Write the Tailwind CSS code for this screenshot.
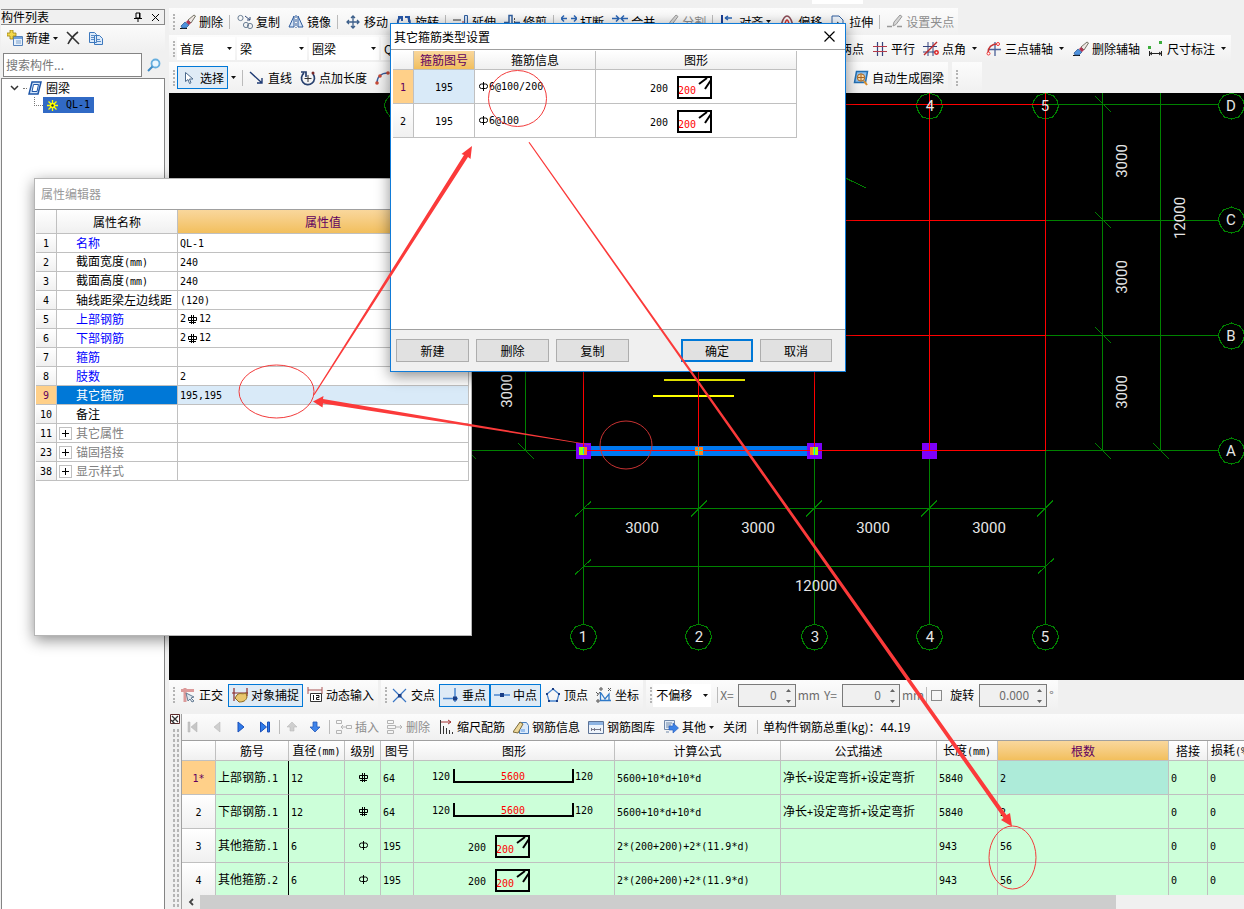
<!DOCTYPE html>
<html lang="zh-CN">
<head>
<meta charset="utf-8">
<title>钢筋算量</title>
<script src="https://cdn.jsdelivr.net/npm/@tailwindcss/browser@4"></script>
</head>
<body class="relative flex h-screen overflow-hidden bg-[#f0f0f0] font-['Noto_Sans_CJK_SC',sans-serif] text-[12px] leading-4 text-black">

<svg class="hidden" aria-hidden="true">
  <symbol id="caret" viewBox="0 0 5 3"><path d="M0 0h5L2.500 3z" fill="#111"/></symbol>
  <symbol id="erase" viewBox="0 0 16 16"><path d="M0 14.500h7" stroke="#111"/><path d="M1 12l4-4 4 3-3 3H2z" fill="#4f92dc" stroke="#27518e" stroke-width=".700"/><path d="M8 6l3 3 4.500-7-1.500-1z" fill="#efe7e4" stroke="#554" stroke-width=".800"/><path d="M6 8l3 3 2-2-3-3z" fill="#b03352"/></symbol>
  <symbol id="copy2" viewBox="0 0 16 16" fill="none" stroke="#6b7f95"><circle cx="3.500" cy="4" r="2.600"/><circle cx="9" cy="11" r="2.600"/><circle cx="13" cy="12" r="2.600"/><path d="M8 2l5 4m0-3v3h-3" stroke="#334a77"/></symbol>
  <symbol id="mirror" viewBox="0 0 16 16"><path d="M6 2v11H1zM10 2v11h5z" fill="#d6e4f6" stroke="#2c5a9c"/><path d="M8 1v13" stroke="#2c5a9c" stroke-dasharray="3 1"/></symbol>
  <symbol id="move" viewBox="0 0 16 16"><path d="M8 2v12M2 8h12M6 4l2-2 2 2M6 12l2 2 2-2M4 6L2 8l2 2M12 6l2 2-2 2" fill="none" stroke="#3d5f8a" stroke-width="1.300"/></symbol>
  <symbol id="rotate" viewBox="0 0 16 16"><path d="M5 3a6 6 0 1 0 7 1M2 3h4v4M13 8V3H9" fill="none" stroke="#2757a8" stroke-width="2"/></symbol>
  <symbol id="extend" viewBox="0 0 16 16"><path d="M0 6h8M0 10h8" stroke="#333"/><path d="M9 8h3" stroke="#a33"/><path d="M11.500 1.500h3v12h-3z" fill="#d6e4f6" stroke="#315f9e"/></symbol>
  <symbol id="trim" viewBox="0 0 16 16"><path d="M0 8.500h5M11 8.500h5M5 13V1.500h3v11" fill="none" stroke="#315f9e" stroke-width="1.500"/><path d="M10.500 4v9" stroke="#555" stroke-dasharray="2 1"/></symbol>
  <symbol id="break" viewBox="0 0 16 16"><path d="M0 4.500h6M10 4.500h6M3 1.500l-3 3 3 3M13 1.500l3 3-3 3" fill="none" stroke="#2b66b5" stroke-width="1.500"/><path d="M1 12h5M10 12h5" stroke="#a33"/></symbol>
  <symbol id="merge" viewBox="0 0 16 16"><path d="M0 4.500h6M10 4.500h6M4 1.500l3 3-3 3M12 1.500l-3 3 3 3" fill="none" stroke="#2b66b5" stroke-width="1.500"/><path d="M1 12h14" stroke="#a33"/></symbol>
  <symbol id="split" viewBox="0 0 16 16"><path d="M0 12.500h5M10 12.500h5" stroke="#999" stroke-width="1.500"/><path d="M6 12l1-4 6-7 2 1.500-6 8z" fill="#d6d6d6" stroke="#999"/></symbol>
  <symbol id="align" viewBox="0 0 16 16"><path d="M2 1v14" stroke="#1b3f93" stroke-width="2"/><path d="M5 4h7M5 4l3-2M5 4l3 2" stroke="#2b66b5" fill="none" stroke-width="1.500"/><path d="M4 9h9v3H4z" fill="#c33"/></symbol>
  <symbol id="offset" viewBox="0 0 16 16" fill="none"><path d="M1 13c2-1 2-11 7-11s5 10 7 11" stroke="#8a4b55" stroke-width="1.500"/><path d="M5 13c1-1 1-7 3-7s2 6 3 7" stroke="#c33" stroke-width="1.500"/></symbol>
  <symbol id="stretch" viewBox="0 0 16 16"><path d="M2 14V2h7l4 4v8" fill="#eef4fb" stroke="#315f9e"/><path d="M7 8l7 5m0-3v3h-3" fill="none" stroke="#333"/></symbol>
  <symbol id="par" viewBox="0 0 16 16"><path d="M5.500 1v14M10.500 1v14" stroke="#35437c" stroke-width="1.200"/><path d="M1 5.500h14M1 10.500h14" stroke="#b33a4a" stroke-width="1.200"/></symbol>
  <symbol id="ang" viewBox="0 0 16 16"><path d="M5 1v14M10 1v14M0 5.500h14M0 11h12" stroke="#35437c"/><path d="M1 14L14 1" stroke="#c02a2a" stroke-width="1.500"/><circle cx="13.500" cy="11.500" r="1.700" fill="none" stroke="#d22" stroke-width="1.500"/></symbol>
  <symbol id="three" viewBox="0 0 16 16"><path d="M9 1v14M3 8.500h12" stroke="#4b6199" stroke-width="1.300"/><path d="M2 12C2 6 6 3 12 3" fill="none" stroke="#c53434" stroke-width="1.500"/><circle cx="2.500" cy="12.500" r="1.500" fill="#fff" stroke="#e33"/><circle cx="12" cy="3" r="1.500" fill="#fff" stroke="#e33"/></symbol>
  <symbol id="dim" viewBox="0 0 16 16"><path d="M0 5h3v3H0zM11 0h3v3h-3z" fill="#3cae3c"/><path d="M1.500 10v5M13.500 10v5M2 12.500h11M4 11l-2 1.500L4 14M11 11l2 1.500-2 1.500" stroke="#222" fill="none"/></symbol>
  <symbol id="cursor" viewBox="0 0 16 16"><path d="M4.500 2.500v9l2.500-2 1.500 4 1.500-.700-1.500-3.800H12z" fill="#fff" stroke="#4b6a8d"/></symbol>
  <symbol id="line" viewBox="0 0 16 16"><path d="M1 2l12 11M13 8v5H8" fill="none" stroke="#1f3b74" stroke-width="1.400"/></symbol>
  <symbol id="addlen" viewBox="0 0 16 16"><path d="M4 3a6.500 6.500 0 1 0 9 1M1 2h5v5" fill="none" stroke="#27406e" stroke-width="1.700"/><path d="M8 5v7M4.500 8.500h7" stroke="#333"/><circle cx="13" cy="3" r="1.500" fill="#7a2a2a"/></symbol>
  <symbol id="arc" viewBox="0 0 16 16"><path d="M2 13C2 7 6 3 13 3" fill="none" stroke="#3c5e9c" stroke-width="1.500"/><circle cx="2" cy="13" r="1.800" fill="#c94a36"/><circle cx="5" cy="6" r="1.800" fill="#c94a36"/><circle cx="13" cy="3" r="1.800" fill="#c94a36"/></symbol>
  <symbol id="auto" viewBox="0 0 16 16"><path d="M3.500 1.500h11l-2 11h-11z" fill="#8fc0ee" stroke="#2370b4" stroke-width="1.500"/><circle cx="8" cy="7.500" r="3.700" fill="#f6d9ac" stroke="#a8651d"/><path d="M8 4v7M4.500 7.500h7" stroke="#a8651d"/><path d="M11 11l3 4" stroke="#d98d2b" stroke-width="2"/></symbol>
  <symbol id="new" viewBox="0 0 16 16"><path d="M6.500 6.500h9v9h-9z" fill="#e6f0fb" stroke="#5582bb"/><path d="M7 7h8v2H7z" fill="#6ea0dc"/><path d="M9 11h5M9 13h5" stroke="#7ba0cc"/><path d="M3 0h3v3h3v3H6v3H3V6H0V3h3z" fill="#f4d84a" stroke="#9c8412" stroke-width=".800"/></symbol>
  <symbol id="pages" viewBox="0 0 16 16"><path d="M1.500 2.500h5l2 2v8h-7zM6.500 5.500h5l3 3v6h-8z" fill="#dceafa" stroke="#3c78bd"/><path d="M3 5.500h3M3 7.500h3M3 9.500h3M8 9.500h4M8 11.500h5" stroke="#5b8cc6"/></symbol>
  <symbol id="ortho" viewBox="0 0 16 16"><path d="M5 1v14M1 3.500h13" stroke="#dc9a9a" stroke-width="3"/><path d="M6 6l8 4-3 1 3 3-2 1-2-3-2 2z" fill="#dde6ee" stroke="#667c93"/></symbol>
  <symbol id="snap" viewBox="0 0 16 16"><path d="M2 1v13M15 1v8M0 6h16" stroke="#8a2a2a" stroke-width="1.200"/><path d="M5 8c3-3 5 0 9-2l1 4c-1 4-4 5-8 5l-4-4z" fill="#e9c76e" stroke="#8d6a1f"/></symbol>
  <symbol id="dyn" viewBox="0 0 16 16"><path d="M1 0v7M15 0v7M1 3h14" stroke="#a55"/><path d="M3.500 6.500h11v8h-11z" fill="#fff" stroke="#333"/><path d="M6.500 8v5M9 8.500h3v2H9.500v2H12.500" stroke="#111" fill="none"/></symbol>
  <symbol id="cross" viewBox="0 0 16 16"><path d="M1 2l13 13M14 2L1 15" stroke="#3a76c4" stroke-width="1.200"/><path d="M6 7h3.500v3.500H6z" fill="#1b3f86"/></symbol>
  <symbol id="perp" viewBox="0 0 16 16"><path d="M12 1v14M0 11.500h15" stroke="#4a86cf" stroke-width="1.500"/><path d="M10 9.500h4v4h-4z" fill="#1b3f86"/></symbol>
  <symbol id="mid" viewBox="0 0 16 16"><path d="M0 8h16" stroke="#4a86cf" stroke-width="1.500"/><path d="M6 6h4v4H6z" fill="#1b3f86"/></symbol>
  <symbol id="vert" viewBox="0 0 16 16"><path d="M8 2l6 5-2 7H4L2 7z" fill="none" stroke="#4a86cf" stroke-width="1.300"/><path d="M7 1h2v2H7zM1 6h2v2H1zM13 6h2v2h-2zM3 13h2v2H3zM11 13h2v2h-2z" fill="#1b3f86"/></symbol>
  <symbol id="coord" viewBox="0 0 16 16" fill="none"><path d="M4.500 5v8.500H15M5 6l4 6 4-5v7" stroke="#2f79c8" stroke-width="1.300"/><circle cx="5" cy="2" r="1.200" stroke="#444"/><circle cx="2" cy="14" r="1.200" stroke="#444"/><path d="M12 1l3 3m0-3l-3 3M0 5l2 2m2-2L1 9" stroke="#555"/></symbol>
  <symbol id="first" viewBox="0 0 16 16"><path d="M3 3h2v10H3zM12 3v10L6 8z" fill="#c6c6c6" stroke="#b2b2b2" stroke-width=".500"/></symbol>
  <symbol id="prev" viewBox="0 0 16 16"><path d="M11 3v10L5 8z" fill="#cfcfcf" stroke="#b2b2b2" stroke-width=".500"/></symbol>
  <symbol id="next" viewBox="0 0 16 16"><path d="M5 3v10l6-5z" fill="#2f7bea" stroke="#1c50b8"/></symbol>
  <symbol id="last" viewBox="0 0 16 16"><path d="M3.500 3v10L9.500 8zM10.500 3h2v10h-2z" fill="#2f7bea" stroke="#1c50b8"/></symbol>
  <symbol id="up" viewBox="0 0 16 16"><path d="M8 3l5 5h-3v4H6V8H3z" fill="#cfcfcf" stroke="#b2b2b2" stroke-width=".500"/></symbol>
  <symbol id="down" viewBox="0 0 16 16"><path d="M8 13l5-5h-3V3H6v5H3z" fill="#3f84ea" stroke="#2459b8" stroke-width=".800"/></symbol>
  <symbol id="ins" viewBox="0 0 16 16" fill="none" stroke="#b4b4b4"><path d="M.500 1.500h5v3h-5zM.500 11.500h5v3h-5zM10.500 6.500h5v3h-5zM10 8H5M7 6L5 8l2 2"/></symbol>
  <symbol id="delr" viewBox="0 0 16 16" fill="none" stroke="#b4b4b4"><path d="M.500 1.500h6v3h-6zM.500 11.500h6v3h-6zM.500 6.500h8v3h-8zM9 8h6M13 6l2 2-2 2"/></symbol>
  <symbol id="scale" viewBox="0 0 16 16"><path d="M3 3h10m-3-2l3 2-3 2" stroke="#a23333" fill="none"/><path d="M2.500 1v14M5.500 7v8M8.500 9v6M11.500 11v4M14.500 13v2" stroke="#333"/></symbol>
  <symbol id="info" viewBox="0 0 16 16"><path d="M6.500 3.500h7l2 3v8h-9z" fill="#dceafa" stroke="#4a7fbe"/><path d="M0 13l7-10 3 2-5 9z" fill="#ecd79a" stroke="#7b6a3b"/><path d="M7 10h5v3H8z" fill="#9bc1ee"/></symbol>
  <symbol id="lib" viewBox="0 0 16 16"><path d="M.500 2.500h15v12H.500z" fill="#eef4fb" stroke="#5d7396"/><path d="M1 3h14v3H1z" fill="#8db3e2"/><path d="M3 10.500h10M3.500 9v3M6.500 9v3M12.500 9v3" stroke="#778" fill="none"/></symbol>
  <symbol id="other" viewBox="0 0 16 16"><path d="M1.500 1.500h10v9h-10z" fill="#e4edf8" stroke="#6f87a8"/><path d="M3 4h6M3 6h5M3 8h4M3 13h3" stroke="#6f87a8"/><path d="M6 7h4V4l5.500 5-5.500 5v-3H6z" fill="#3c82e6" stroke="#2459b8" stroke-width=".600"/></symbol>
  <symbol id="rebar" viewBox="0 0 11 11"><path d="M1.500 3.500h8v3h-8zM4.500 1v9M6.500 1v9M2 8.500h7" fill="none" stroke="#000"/></symbol>
  <symbol id="plain" viewBox="0 0 11 11"><rect x="1.500" y="3" width="8" height="4.500" rx="2" fill="none" stroke="#000"/><path d="M5.500 1v9" stroke="#000"/></symbol>
  <symbol id="stirrup" viewBox="0 0 63 33"><text x="0" y="22" font-size="10">200</text><path d="M28 7h33v21H28z" fill="none" stroke="#000" stroke-width="2"/><path d="M49 14l8-6M55 19l6-9" stroke="#000" stroke-width="2"/><text x="28" y="24" font-size="10" fill="red">200</text></symbol>
  <symbol id="ubar" viewBox="0 0 200 33"><text x="18" y="19" font-size="10">120</text><path d="M40 8v13h119V8" fill="none" stroke="#000" stroke-width="2"/><text x="87" y="19" font-size="10" fill="red">5600</text><text x="161" y="19" font-size="10">120</text></symbol>
</svg>

<!-- Component list -->
<aside class="flex w-[166px] flex-none flex-col pt-[9px]">
  <header class="mx-px flex h-4 items-center justify-between border border-l-0 border-[#8a8a8a] pr-1">
    <h2>构件列表</h2>
    <div class="flex items-center gap-2">
      <button aria-label="固定"><svg class="h-[10px] w-[10px]" viewBox="0 0 10 10"><path d="M3 1h4v5H3zM1 6.500h8M5 7v3M6.500 1v5" fill="none" stroke="#000"/></svg></button>
      <button aria-label="关闭"><svg class="h-[9px] w-[9px]" viewBox="0 0 9 9"><path d="M1 1l7 7M8 1L1 8" stroke="#000"/></svg></button>
    </div>
  </header>
  <div class="mx-px flex h-[26px] items-center gap-2 bg-linear-to-b from-[#fbfbfb] to-[#f0f0f0] pl-[6px]">
    <button class="flex items-center gap-[3px]"><svg class="h-4 w-4"><use href="#new"/></svg>新建<svg class="h-[3px] w-[5px]"><use href="#caret"/></svg></button>
    <button aria-label="删除构件"><svg class="h-[14px] w-[14px]" viewBox="0 0 14 14"><path d="M1 1c4 4 8 8 12 12M12 1C8 4 4 9 2 13" fill="none" stroke="#333" stroke-width="1.600"/></svg></button>
    <button aria-label="复制构件"><svg class="h-4 w-4"><use href="#pages"/></svg></button>
  </div>
  <div class="mx-px flex h-[27px] items-center pl-[2px]">
    <input class="h-6 w-[139px] border border-[#848484] bg-white px-[2px] placeholder:text-[#777]" placeholder="搜索构件..." aria-label="搜索构件">
    <button class="flex flex-1 justify-center" aria-label="搜索"><svg class="h-4 w-4" viewBox="0 0 16 16"><circle cx="9.500" cy="6.500" r="4" fill="#eaf6fe" stroke="#66aede" stroke-width="1.800"/><path d="M6.500 9.500L2 14" stroke="#3d8bc6" stroke-width="2"/></svg></button>
  </div>
  <div class="mx-px flex-1 border border-b-0 border-[#848484] bg-white">
    <ul>
      <li>
        <div class="flex h-[18px] items-center pl-2"><svg class="h-[6px] w-[9px]" viewBox="0 0 9 6"><path d="M1 1l3.500 3.500L8 1" fill="none" stroke="#333" stroke-width="1.500"/></svg><span class="ml-1 w-[4px] border-t border-dotted border-[#777]"></span><svg class="ml-px h-[14px] w-[14px]" viewBox="0 0 14 14"><path d="M4 1h9l-3 12H1z" fill="#d7e8fb" stroke="#1e56a8" stroke-width="1.500"/><path d="M5.500 3.500h5L9 10.500H4z" fill="#fff" stroke="#1e56a8"/></svg><span class="ml-1">圈梁</span></div>
        <ul>
          <li class="flex h-4 items-start pl-[32px]"><span class="h-[9px] w-[9px] flex-none border-b border-l border-dotted border-[#777]"></span>
            <span class="flex h-4 w-[51px] items-center gap-2 bg-[#316ac5] pl-1"><svg class="h-[11px] w-[11px]" viewBox="0 0 11 11"><path d="M5.500 0v11M0 5.500h11M1.500 1.500l8 8M9.500 1.500l-8 8" stroke="#ff0" stroke-width="1.300"/><circle cx="5.500" cy="5.500" r="2.700" fill="#ff0"/><circle cx="5.500" cy="5.500" r="1.200" fill="#333"/></svg><span class="font-['DejaVu_Sans_Mono',monospace] text-[10px]">QL-1</span></span></li>
        </ul>
      </li>
    </ul>
  </div>
</aside>

<main class="ml-[3px] flex min-w-0 flex-1 flex-col">
  <div class="h-2 flex-none"><div class="ml-[643px] h-1 w-[51px] bg-white"></div></div>

  <!-- Edit toolbar -->
  <div class="flex h-[27px] flex-none [&_button]:flex [&_button]:flex-none [&_button]:items-center [&_button]:gap-[3px] [&_button]:px-1 [&_button]:whitespace-nowrap [&_hr]:mr-[3px] [&_hr]:ml-[2px] [&_hr]:h-[14px] [&_hr]:w-px [&_hr]:flex-none [&_hr]:border-0 [&_hr]:bg-[#bbb] [&_button>svg:first-child]:h-4 [&_button>svg:first-child]:w-4">
    <div class="flex items-center bg-linear-to-b from-[#fcfcfc] to-[#f0f0f0] pl-1">
      <i class="h-4 w-[3px] border-l-2 border-dotted border-[#b4b4b4]"></i>
      <button><svg><use href="#erase"/></svg>删除</button><hr>
      <button><svg><use href="#copy2"/></svg>复制</button>
      <button><svg><use href="#mirror"/></svg>镜像</button><hr>
      <button><svg><use href="#move"/></svg>移动</button>
      <button><svg><use href="#rotate"/></svg>旋转</button><hr>
      <button><svg><use href="#extend"/></svg>延伸</button>
      <button><svg><use href="#trim"/></svg>修剪</button><hr>
      <button><svg><use href="#break"/></svg>打断</button>
      <button><svg><use href="#merge"/></svg>合并</button>
      <button class="text-[#8d8d8d]" disabled><svg><use href="#split"/></svg>分割</button><hr>
      <button><svg><use href="#align"/></svg>对齐<svg class="h-[3px] w-[5px]"><use href="#caret"/></svg></button>
      <button><svg><use href="#offset"/></svg>偏移</button>
      <button><svg><use href="#stretch"/></svg>拉伸</button><hr>
      <button class="text-[#8d8d8d]" disabled><svg><use href="#split"/></svg>设置夹点</button>
    </div>
  </div>

  <!-- Component and axis toolbar -->
  <div class="flex h-[27px] flex-none [&_button]:flex [&_button]:flex-none [&_button]:items-center [&_button]:gap-[3px] [&_button]:px-1 [&_button]:whitespace-nowrap [&_button>svg:first-child]:h-4 [&_button>svg:first-child]:w-4 [&_select]:h-[23px] [&_select]:w-full [&_select]:appearance-none [&_select]:bg-white [&_select]:pl-[3px]">
    <div class="flex items-center bg-linear-to-b from-[#fcfcfc] to-[#f0f0f0] pl-1">
      <i class="h-4 w-[3px] border-l-2 border-dotted border-[#b4b4b4]"></i>
      <div class="relative ml-px w-[58px] flex-none"><select aria-label="楼层"><option>首层</option></select><svg class="absolute top-[10px] right-[3px] h-[3px] w-[5px]"><use href="#caret"/></svg></div>
      <div class="relative ml-[2px] w-[70px] flex-none"><select aria-label="构件大类"><option>梁</option></select><svg class="absolute top-[10px] right-[3px] h-[3px] w-[5px]"><use href="#caret"/></svg></div>
      <div class="relative ml-[2px] w-[70px] flex-none"><select aria-label="构件类型"><option>圈梁</option></select><svg class="absolute top-[10px] right-[3px] h-[3px] w-[5px]"><use href="#caret"/></svg></div>
      <div class="relative ml-[2px] w-[70px] flex-none"><select aria-label="构件名称"><option>QL-1</option></select></div>
      <div class="w-[366px] flex-none"></div>
      <button><svg><use href="#par"/></svg>两点</button>
      <button><svg><use href="#par"/></svg>平行</button>
      <button><svg><use href="#ang"/></svg>点角<svg class="mr-px ml-[3px] h-[3px] w-[5px]"><use href="#caret"/></svg></button>
      <button><svg><use href="#three"/></svg>三点辅轴<svg class="mr-px ml-[3px] h-[3px] w-[5px]"><use href="#caret"/></svg></button>
      <button><svg><use href="#erase"/></svg>删除辅轴</button>
      <button><svg><use href="#dim"/></svg>尺寸标注<svg class="mr-px ml-[3px] h-[3px] w-[5px]"><use href="#caret"/></svg></button>
    </div>
  </div>

  <!-- Drawing toolbar -->
  <div class="flex h-[31px] flex-none [&_button]:flex [&_button]:flex-none [&_button]:items-center [&_button]:gap-[3px] [&_button]:px-1 [&_button]:whitespace-nowrap [&_button>svg:first-child]:h-4 [&_button>svg:first-child]:w-4">
    <div class="flex items-center bg-linear-to-b from-[#fcfcfc] to-[#f0f0f0] pl-1">
      <i class="h-4 w-[3px] border-l-2 border-dotted border-[#b4b4b4]"></i>
      <button class="ml-px h-[23px] border border-[#0078d7] bg-[#dfebf6] px-[3px]!"><svg><use href="#cursor"/></svg>选择</button>
      <svg class="ml-[3px] h-[3px] w-[5px]"><use href="#caret"/></svg>
      <hr class="mr-[2px] ml-[6px] h-4 w-px border-0 bg-[#bbb]">
      <button><svg><use href="#line"/></svg>直线</button>
      <button><svg><use href="#addlen"/></svg>点加长度</button>
      <button aria-label="三点画弧"><svg><use href="#arc"/></svg></button>
      <div class="w-[454px] flex-none"></div>
      <button><svg><use href="#auto"/></svg>自动生成圈梁</button>
    </div>
    <div class="ml-1 flex w-[30px] items-center bg-linear-to-b from-[#fcfcfc] to-[#f0f0f0] pl-1"><i class="h-4 w-[3px] border-l-2 border-dotted border-[#b4b4b4]"></i></div>
  </div>

  <!-- Drawing canvas -->
  <div class="min-h-0 flex-1 overflow-hidden bg-black">
    <svg class="h-full w-full font-[Roboto,sans-serif]" role="img" aria-label="轴网平面图">
      <g transform="translate(-169 -93)">
        <g stroke="#008200" fill="none" shape-rendering="crispEdges">
          <path d="M583.500 451V624M698.500 451V624M814.500 451V624M929.500 451V624M1045.500 451V624"/>
          <path d="M471 450.500H583M1045 104.500H1218M1045 220.500H1218M1045 335.500H1218M1045 450.500H1218"/>
          <path d="M583 508.500H1046M583 566.500H1046M1102.500 93V451M1160.500 93V451M525.500 93V451"/>
          <path d="M575 516.500l16-15M691 516.500l16-16M806 516.500l16-16M921 516.500l16-16M1037 516.500l16-16M575 574.500l16-15M1038 573.500l16-15"/>
          <path d="M1095 96l16 16M1095 212l16 16M1095 327l16 16M1095 443l16 16M1153 443l16 16M518 443l16 16M468 451l8 8M835 173l31 15"/>
          <path id="oct" d="M583.500 624l8 3 4 5 1 5-2 6-4 5-7 2-7-2-4-5-2-6 1-5 4-5z"/>
          <use href="#oct" x="115"/><use href="#oct" x="231"/><use href="#oct" x="346"/><use href="#oct" x="462"/>
          <use href="#oct" x="-186" y="-531"/><use href="#oct" x="346" y="-531"/><use href="#oct" x="462" y="-531"/>
          <use href="#oct" x="648" y="-531"/><use href="#oct" x="648" y="-417"/><use href="#oct" x="648" y="-301"/><use href="#oct" x="648" y="-186"/>
        </g>
        <path d="M583 446h232v10H583z" fill="#0078f0"/>
        <path d="M576 443h15v16h-15zM807 443h15v16h-15zM922 443h15v16h-15z" fill="#7d00fa"/>
        <path d="M664 380h81M653 396h81" stroke="#ff0" stroke-width="2"/>
        <path d="M583.500 93V451M698.500 93V451M814.500 93V451M929.500 93V451M1045.500 93V451M583 104.500H1046M583 220.500H1046M583 335.500H1046M583 450.500H1046" stroke="red" fill="none" shape-rendering="crispEdges"/>
        <path d="M579 447h8v8h-8zM695 447h8v8h-8zM810 447h8v8h-8z" fill="#ff7d19"/>
        <path d="M579 447h5v8h-5zM813 447h5v8h-5z" fill="#a0ff00"/>
        <path d="M583.500 448v6M698.500 447v8M814.500 447v8M695 450.500h8" stroke="#00d8e8"/>
        <g fill="#e6e6e6" font-size="15" text-anchor="middle">
          <text x="642" y="533">3000</text><text x="758" y="533">3000</text><text x="873" y="533">3000</text><text x="989" y="533">3000</text><text x="816" y="591">12000</text>
          <text transform="translate(512 391) rotate(-90)">3000</text>
          <text transform="translate(1127 161) rotate(-90)">3000</text><text transform="translate(1127 277) rotate(-90)">3000</text><text transform="translate(1127 392) rotate(-90)">3000</text>
          <text transform="translate(1185 218) rotate(-90)">12000</text>
          <text x="583" y="642">1</text><text x="699" y="642">2</text><text x="815" y="642">3</text><text x="930" y="642">4</text><text x="1045" y="642">5</text>
          <text x="930" y="111">4</text><text x="1045" y="111">5</text>
          <text x="1231" y="111">D</text><text x="1231" y="225">C</text><text x="1231" y="341">B</text><text x="1231" y="456">A</text>
        </g>
      </g>
    </svg>
  </div>

  <!-- Snap bar -->
  <div class="flex h-[30px] flex-none gap-[3px] [&>div]:flex [&>div]:flex-none [&>div]:items-center [&>div]:bg-linear-to-b [&>div]:from-[#fcfcfc] [&>div]:to-[#f0f0f0] [&>div]:pl-1 [&_i]:h-4 [&_i]:w-[3px] [&_i]:border-l-2 [&_i]:border-dotted [&_i]:border-[#b4b4b4] [&_button]:flex [&_button]:flex-none [&_button]:items-center [&_button]:whitespace-nowrap">
    <div class="[&_button]:gap-[3px] [&_button]:px-1 [&_svg]:h-4 [&_svg]:w-4">
      <i></i>
      <button><svg><use href="#ortho"/></svg>正交</button>
      <button class="ml-px h-[23px] border border-[#0078d7] bg-[#dfebf6] px-[3px]!"><svg><use href="#snap"/></svg>对象捕捉</button>
      <button><svg><use href="#dyn"/></svg>动态输入</button>
    </div>
    <div class="[&_button]:gap-[3px] [&_button]:px-1 [&_svg]:h-4 [&_svg]:w-4">
      <i></i>
      <button><svg><use href="#cross"/></svg>交点</button>
      <button class="h-[23px] border border-[#0078d7] bg-[#dfebf6] px-[3px]!"><svg><use href="#perp"/></svg>垂点</button>
      <button class="h-[23px] border border-[#0078d7] bg-[#dfebf6] px-[3px]!"><svg><use href="#mid"/></svg>中点</button>
      <button><svg><use href="#vert"/></svg>顶点</button>
      <button><svg><use href="#coord"/></svg>坐标</button>
    </div>
    <div class="text-[#6d6d6d]">
      <i></i>
      <span class="relative w-[58px]"><select class="h-[23px] w-full appearance-none bg-white pl-[3px] text-black" aria-label="偏移方式"><option>不偏移</option></select><svg class="absolute top-[10px] right-[3px] h-[3px] w-[5px]"><use href="#caret"/></svg></span>
      <hr class="ml-[6px] h-4 w-px border-0 bg-[#bbb]">
      <label for="ox" class="mr-[4px] ml-[2px]">X=</label>
      <span class="flex h-[23px] w-[58px] items-center border border-[#7a7a7a] bg-[#f0f0f0]"><input id="ox" value="0" class="w-[38px] text-right"><svg class="ml-auto h-[17px] w-[13px]" viewBox="0 0 13 17"><path d="M4 5l2.500-3L9 5zM4 13l2.500 3L9 13z" fill="#666"/></svg></span>
      <label for="oy" class="mr-[5px] ml-[2px] flex gap-1"><span>mm</span><span>Y=</span></label>
      <span class="flex h-[23px] w-[58px] items-center border border-[#7a7a7a] bg-[#f0f0f0]"><input id="oy" value="0" class="w-[38px] text-right"><svg class="ml-auto h-[17px] w-[13px]" viewBox="0 0 13 17"><path d="M4 5l2.500-3L9 5zM4 13l2.500 3L9 13z" fill="#666"/></svg></span>
      <span class="ml-[2px]">mm</span>
      <hr class="mr-[4px] ml-[2px] h-4 w-px border-0 bg-[#bbb]">
      <input id="rot" type="checkbox" class="h-[11px] w-[11px] appearance-none border border-[#8a8a8a]">
      <label for="rot" class="mr-[5px] ml-2 text-black">旋转</label>
      <span class="flex h-[23px] w-[68px] items-center border border-[#7a7a7a] bg-[#f0f0f0]"><input value="0.000" class="w-[49px] text-right" aria-label="旋转角度"><svg class="ml-auto h-[17px] w-[13px]" viewBox="0 0 13 17"><path d="M4 5l2.500-3L9 5zM4 13l2.500 3L9 13z" fill="#666"/></svg></span>
      <span class="mr-1 ml-[2px]">°</span>
    </div>
  </div>

  <!-- Rebar table panel -->
  <section class="mt-1 flex h-[195px] flex-none">
    <div class="flex w-3 flex-none flex-col pl-px">
      <button aria-label="关闭面板" class="h-[10px]"><svg class="h-[10px] w-[10px]" viewBox="0 0 10 10"><path d="M.500.500h9v9h-9z" fill="#fff" stroke="#5b2a2a"/><path d="M2 2l6 6M8 2L2 8M1 6l4 4" stroke="#333" stroke-width="1.300"/></svg></button>
      <div class="mt-1 ml-[2px] flex-1 bg-[radial-gradient(#b4b4b4_1px,transparent_1px)] bg-[size:4px_5px]"></div>
    </div>
    <div class="flex min-w-0 flex-1 flex-col border-l border-[#a0a0a0]">
      <div class="flex h-[26px] flex-none items-center bg-linear-to-b from-[#fcfcfc] to-[#f0f0f0] [&_button]:flex [&_button]:flex-none [&_button]:items-center [&_button]:gap-[3px] [&_button]:px-1 [&_button]:whitespace-nowrap [&_button>svg:first-child]:h-4 [&_button>svg:first-child]:w-4 [&_hr]:mr-px [&_hr]:ml-[2px] [&_hr]:h-[14px] [&_hr]:w-px [&_hr]:border-0 [&_hr]:bg-[#bbb]">
        <button class="pl-[3px]!" aria-label="首行" disabled><svg><use href="#first"/></svg></button>
        <button aria-label="上一行" disabled><svg><use href="#prev"/></svg></button>
        <button aria-label="下一行"><svg><use href="#next"/></svg></button>
        <button aria-label="末行"><svg><use href="#last"/></svg></button><hr>
        <button class="px-[3px]!" aria-label="上移" disabled><svg><use href="#up"/></svg></button>
        <button aria-label="下移"><svg><use href="#down"/></svg></button><hr>
        <button class="pl-[5px]! text-[#8d8d8d]" disabled><svg><use href="#ins"/></svg>插入</button>
        <button class="text-[#8d8d8d]" disabled><svg><use href="#delr"/></svg>删除</button>
        <button><svg><use href="#scale"/></svg>缩尺配筋</button>
        <button><svg><use href="#info"/></svg>钢筋信息</button>
        <button><svg><use href="#lib"/></svg>钢筋图库</button>
        <button><svg><use href="#other"/></svg>其他<svg class="h-[3px] w-[5px]"><use href="#caret"/></svg></button>
        <button class="pl-[5px]!">关闭</button>
        <output class="ml-[6px] flex items-center gap-[5px] whitespace-nowrap"><span class="h-[14px] w-px bg-[#bbb]"></span>单构件钢筋总重(kg)：44.19</output>
      </div>
      <div class="min-h-0 flex-1 overflow-hidden border-t border-[#a0a0a0] bg-white">
        <table class="w-[1075px] table-fixed border-separate border-spacing-0 whitespace-nowrap [&_b]:font-['DejaVu_Sans_Mono',monospace] [&_b]:text-[10px] [&_b]:font-normal [&_tbody_td]:h-[34px] [&_td]:border-r [&_td]:border-b [&_td]:border-[#c0c0c0] [&_td]:bg-[#ccffd9] [&_td]:py-0 [&_td]:pr-0 [&_td]:pl-[2px] [&_th]:border-r [&_th]:border-b [&_th]:border-[#c0c0c0] [&_th]:bg-linear-to-b [&_th]:from-white [&_th]:to-[#f0f0f0] [&_th]:p-0 [&_th]:text-center [&_th]:font-normal">
          <colgroup><col class="w-[34px]"><col class="w-[73px]"><col class="w-[56px]"><col class="w-[36px]"><col class="w-[33px]"><col class="w-[201px]"><col class="w-[166px]"><col class="w-[156px]"><col class="w-[61px]"><col class="w-[171px]"><col class="w-[39px]"><col class="w-[49px]"></colgroup>
          <thead><tr class="h-[20px]"><th></th><th>筋号</th><th>直径<b>(mm)</b></th><th>级别</th><th>图号</th><th>图形</th><th>计算公式</th><th>公式描述</th><th>长度<b>(mm)</b></th><th class="from-[#f9d79c]! to-[#f2bf5c]! text-[#600060]">根数</th><th>搭接</th><th>损耗<b>(%)</b></th></tr></thead>
          <tbody>
            <tr><th class="from-[#ffd089]! to-[#ffd089]! text-[#600060]"><b>1*</b></th><td class="border-r-black!">上部钢筋<b>.1</b></td><td><b>12</b></td><td><svg class="mx-auto h-[11px] w-[11px]" aria-label="三级钢"><use href="#rebar"/></svg></td><td><b>64</b></td><td class="pl-0!"><svg class="block h-[33px] w-[200px] font-['DejaVu_Sans_Mono',monospace]"><use href="#ubar"/></svg></td><td><b>5600+10*d+10*d</b></td><td>净长<b>+</b>设定弯折<b>+</b>设定弯折</td><td><b>5840</b></td><td class="bg-[#adebd9]!"><b>2</b></td><td><b>0</b></td><td><b>0</b></td></tr>
            <tr><th><b>2</b></th><td class="border-r-black!">下部钢筋<b>.1</b></td><td><b>12</b></td><td><svg class="mx-auto h-[11px] w-[11px]" aria-label="三级钢"><use href="#rebar"/></svg></td><td><b>64</b></td><td class="pl-0!"><svg class="block h-[33px] w-[200px] font-['DejaVu_Sans_Mono',monospace]"><use href="#ubar"/></svg></td><td><b>5600+10*d+10*d</b></td><td>净长<b>+</b>设定弯折<b>+</b>设定弯折</td><td><b>5840</b></td><td><b>2</b></td><td><b>0</b></td><td><b>0</b></td></tr>
            <tr><th><b>3</b></th><td class="border-r-black!">其他箍筋<b>.1</b></td><td><b>6</b></td><td><svg class="mx-auto h-[11px] w-[11px]" aria-label="一级钢"><use href="#plain"/></svg></td><td><b>195</b></td><td class="pl-[54px]!"><svg class="block h-[33px] w-[63px] font-['DejaVu_Sans_Mono',monospace]"><use href="#stirrup"/></svg></td><td><b>2*(200+200)+2*(11.9*d)</b></td><td></td><td><b>943</b></td><td><b>56</b></td><td><b>0</b></td><td><b>0</b></td></tr>
            <tr><th><b>4</b></th><td class="border-r-black!">其他箍筋<b>.2</b></td><td><b>6</b></td><td><svg class="mx-auto h-[11px] w-[11px]" aria-label="一级钢"><use href="#plain"/></svg></td><td><b>195</b></td><td class="pl-[54px]!"><svg class="block h-[33px] w-[63px] font-['DejaVu_Sans_Mono',monospace]"><use href="#stirrup"/></svg></td><td><b>2*(200+200)+2*(11.9*d)</b></td><td></td><td><b>943</b></td><td><b>56</b></td><td><b>0</b></td><td><b>0</b></td></tr>
          </tbody>
        </table>
      </div>
      <div class="flex h-[14px] flex-none items-stretch">
        <button class="flex w-[18px] items-center justify-center" aria-label="向左滚动"><svg class="h-[8px] w-[6px]" viewBox="0 0 6 8"><path d="M5 1L2 4l3 3" fill="none" stroke="#444" stroke-width="1.800"/></svg></button>
        <div class="w-[916px] bg-[#cdcdcd]"></div>
      </div>
    </div>
  </section>
</main>

<!-- Property editor window -->
<section class="absolute top-[178px] left-[34px] h-[458px] w-[438px] border border-[#b5b5b5] bg-white shadow-[0_4px_14px_rgba(0,0,0,.45)]" aria-label="属性编辑器">
  <h2 class="flex h-[30px] items-center pl-[6px] text-[#999]">属性编辑器</h2>
  <div class="border-t border-[#a0a0a0] pl-px">
    <table class="w-[433px] table-fixed border-separate border-spacing-0 whitespace-nowrap [&_b]:font-['DejaVu_Sans_Mono',monospace] [&_b]:text-[10px] [&_b]:font-normal [&_tbody_tr]:h-[19px] [&_td]:overflow-hidden [&_td]:border-r [&_td]:border-b [&_td]:border-[#c0c0c0] [&_td]:py-0 [&_td]:pr-0 [&_td]:pl-[2px] [&_td]:leading-4 [&_td:nth-child(2)]:pl-[19px] [&_th]:border-r [&_th]:border-b [&_th]:border-[#c0c0c0] [&_th]:bg-linear-to-b [&_th]:from-white [&_th]:to-[#f0f0f0] [&_th]:p-0 [&_th]:text-center [&_th]:font-normal">
      <colgroup><col class="w-[21px]"><col class="w-[121px]"><col class="w-[291px]"></colgroup>
      <thead><tr class="h-[24px]"><th></th><th>属性名称</th><th class="from-[#f9d79c]! to-[#f2bf5c]! text-[#600060]">属性值</th></tr></thead>
      <tbody>
        <tr><th><b>1</b></th><td class="text-[#00f]">名称</td><td><b>QL-1</b></td></tr>
        <tr><th><b>2</b></th><td>截面宽度<b>(mm)</b></td><td><b>240</b></td></tr>
        <tr><th><b>3</b></th><td>截面高度<b>(mm)</b></td><td><b>240</b></td></tr>
        <tr><th><b>4</b></th><td>轴线距梁左边线距</td><td><b>(120)</b></td></tr>
        <tr><th><b>5</b></th><td class="text-[#00f]">上部钢筋</td><td><b class="flex items-center">2<svg class="mx-px h-[11px] w-[11px]"><use href="#rebar"/></svg>12</b></td></tr>
        <tr><th><b>6</b></th><td class="text-[#00f]">下部钢筋</td><td><b class="flex items-center">2<svg class="mx-px h-[11px] w-[11px]"><use href="#rebar"/></svg>12</b></td></tr>
        <tr><th><b>7</b></th><td class="text-[#00f]">箍筋</td><td></td></tr>
        <tr><th><b>8</b></th><td class="text-[#00f]">肢数</td><td><b>2</b></td></tr>
        <tr><th class="from-[#ffd089]! to-[#ffd089]! text-[#600060]"><b>9</b></th><td class="bg-[#0078d7] text-white">其它箍筋</td><td class="bg-[#d9eaf8]"><b>195,195</b></td></tr>
        <tr><th><b>10</b></th><td>备注</td><td></td></tr>
        <tr><th><b>11</b></th><td class="pl-[2px]! text-[#808080]"><div class="flex items-center gap-1"><button class="h-[13px] w-[13px] border border-[#c0c0c0]" aria-label="展开"><svg class="h-[11px] w-[11px]" viewBox="0 0 11 11"><path d="M2 5.500h7M5.500 2v7" stroke="#000"/></svg></button>其它属性</div></td><td></td></tr>
        <tr><th><b>23</b></th><td class="pl-[2px]! text-[#808080]"><div class="flex items-center gap-1"><button class="h-[13px] w-[13px] border border-[#c0c0c0]" aria-label="展开"><svg class="h-[11px] w-[11px]" viewBox="0 0 11 11"><path d="M2 5.500h7M5.500 2v7" stroke="#000"/></svg></button>锚固搭接</div></td><td></td></tr>
        <tr><th><b>38</b></th><td class="pl-[2px]! text-[#808080]"><div class="flex items-center gap-1"><button class="h-[13px] w-[13px] border border-[#c0c0c0]" aria-label="展开"><svg class="h-[11px] w-[11px]" viewBox="0 0 11 11"><path d="M2 5.500h7M5.500 2v7" stroke="#000"/></svg></button>显示样式</div></td><td></td></tr>
      </tbody>
    </table>
  </div>
</section>

<!-- Stirrup type dialog -->
<section role="dialog" aria-labelledby="dt" class="absolute top-[23px] left-[390px] flex h-[349px] w-[456px] flex-col border border-[#0f7bd8] bg-[#f0f0f0] shadow-[0_4px_14px_rgba(0,0,0,.45)]">
  <header class="flex h-[25px] items-center justify-between bg-white pr-[10px] pl-[3px]"><h2 id="dt">其它箍筋类型设置</h2><button aria-label="关闭"><svg class="h-[11px] w-[11px]" viewBox="0 0 11 11"><path d="M.500.500l10 10M10.500.500l-10 10" stroke="#000" stroke-width="1.200"/></svg></button></header>
  <div class="flex-1 border-y border-[#a0a0a0] bg-white pt-px pl-[2px]">
    <table class="w-[404px] table-fixed border-separate border-spacing-0 whitespace-nowrap [&_b]:font-['DejaVu_Sans_Mono',monospace] [&_b]:text-[10px] [&_b]:font-normal [&_tbody_tr]:h-[34px] [&_td]:border-r [&_td]:border-b [&_td]:border-[#c0c0c0] [&_td]:py-0 [&_td]:pr-0 [&_td]:pl-[3px] [&_th]:border-r [&_th]:border-b [&_th]:border-[#c0c0c0] [&_th]:bg-linear-to-b [&_th]:from-white [&_th]:to-[#f0f0f0] [&_th]:p-0 [&_th]:text-center [&_th]:font-normal">
      <colgroup><col class="w-[21px]"><col class="w-[61px]"><col class="w-[121px]"><col class="w-[201px]"></colgroup>
      <thead><tr class="h-[19px]"><th></th><th class="from-[#f9d79c]! to-[#f2bf5c]! text-[#600060]">箍筋图号</th><th>箍筋信息</th><th>图形</th></tr></thead>
      <tbody>
        <tr><th class="from-[#ffd089]! to-[#ffd089]! text-[#600060]"><b>1</b></th><td class="bg-[#d9eaf8] pl-0! text-center"><b>195</b></td><td><b class="flex items-center"><svg class="h-[11px] w-[11px]" aria-label="一级钢"><use href="#plain"/></svg>6@100/200</b></td><td class="pl-[54px]!"><svg class="block h-[33px] w-[63px] font-['DejaVu_Sans_Mono',monospace]"><use href="#stirrup"/></svg></td></tr>
        <tr><th><b>2</b></th><td class="pl-0! text-center"><b>195</b></td><td><b class="flex items-center"><svg class="h-[11px] w-[11px]" aria-label="一级钢"><use href="#plain"/></svg>6@100</b></td><td class="pl-[54px]!"><svg class="block h-[33px] w-[63px] font-['DejaVu_Sans_Mono',monospace]"><use href="#stirrup"/></svg></td></tr>
      </tbody>
    </table>
  </div>
  <footer class="flex h-[41px] items-center gap-[7px] pr-[13px] pl-[5px] [&_button]:h-[23px] [&_button]:w-[73px] [&_button]:border [&_button]:border-[#adadad] [&_button]:bg-[#e1e1e1]">
    <button>新建</button><button>删除</button><button>复制</button>
    <button class="ml-auto w-[72px]! border-2! border-[#0078d7]!">确定</button><button class="w-[72px]!">取消</button>
  </footer>
</section>

<!-- Annotations -->
<svg class="pointer-events-none absolute inset-0 h-full w-full" aria-hidden="true">
  <g fill="none" stroke="#f23c3c">
    <ellipse cx="517.500" cy="98.500" rx="29" ry="28"/><ellipse cx="276.500" cy="391.500" rx="37.500" ry="26.500"/><ellipse cx="626" cy="445" rx="26" ry="24" stroke="#c83232"/><ellipse cx="1012.500" cy="857.500" rx="23.500" ry="31.500"/>
  </g>
  <g fill="#fb3a3a">
    <path d="M528.500 142.500l1-.500L1006.500 815l3.500-2 2 13.500-11-6.500 2.500-2z"/>
    <path d="M313.500 394.500l1 .500L468 157l2.500 2 1.500-13-10.500 8 2.500 1z"/>
    <path d="M590 445l0-.500L323 399l.500-3L313 401.500l9.500 6 .500-4z"/>
  </g>
</svg>
</body>
</html>
